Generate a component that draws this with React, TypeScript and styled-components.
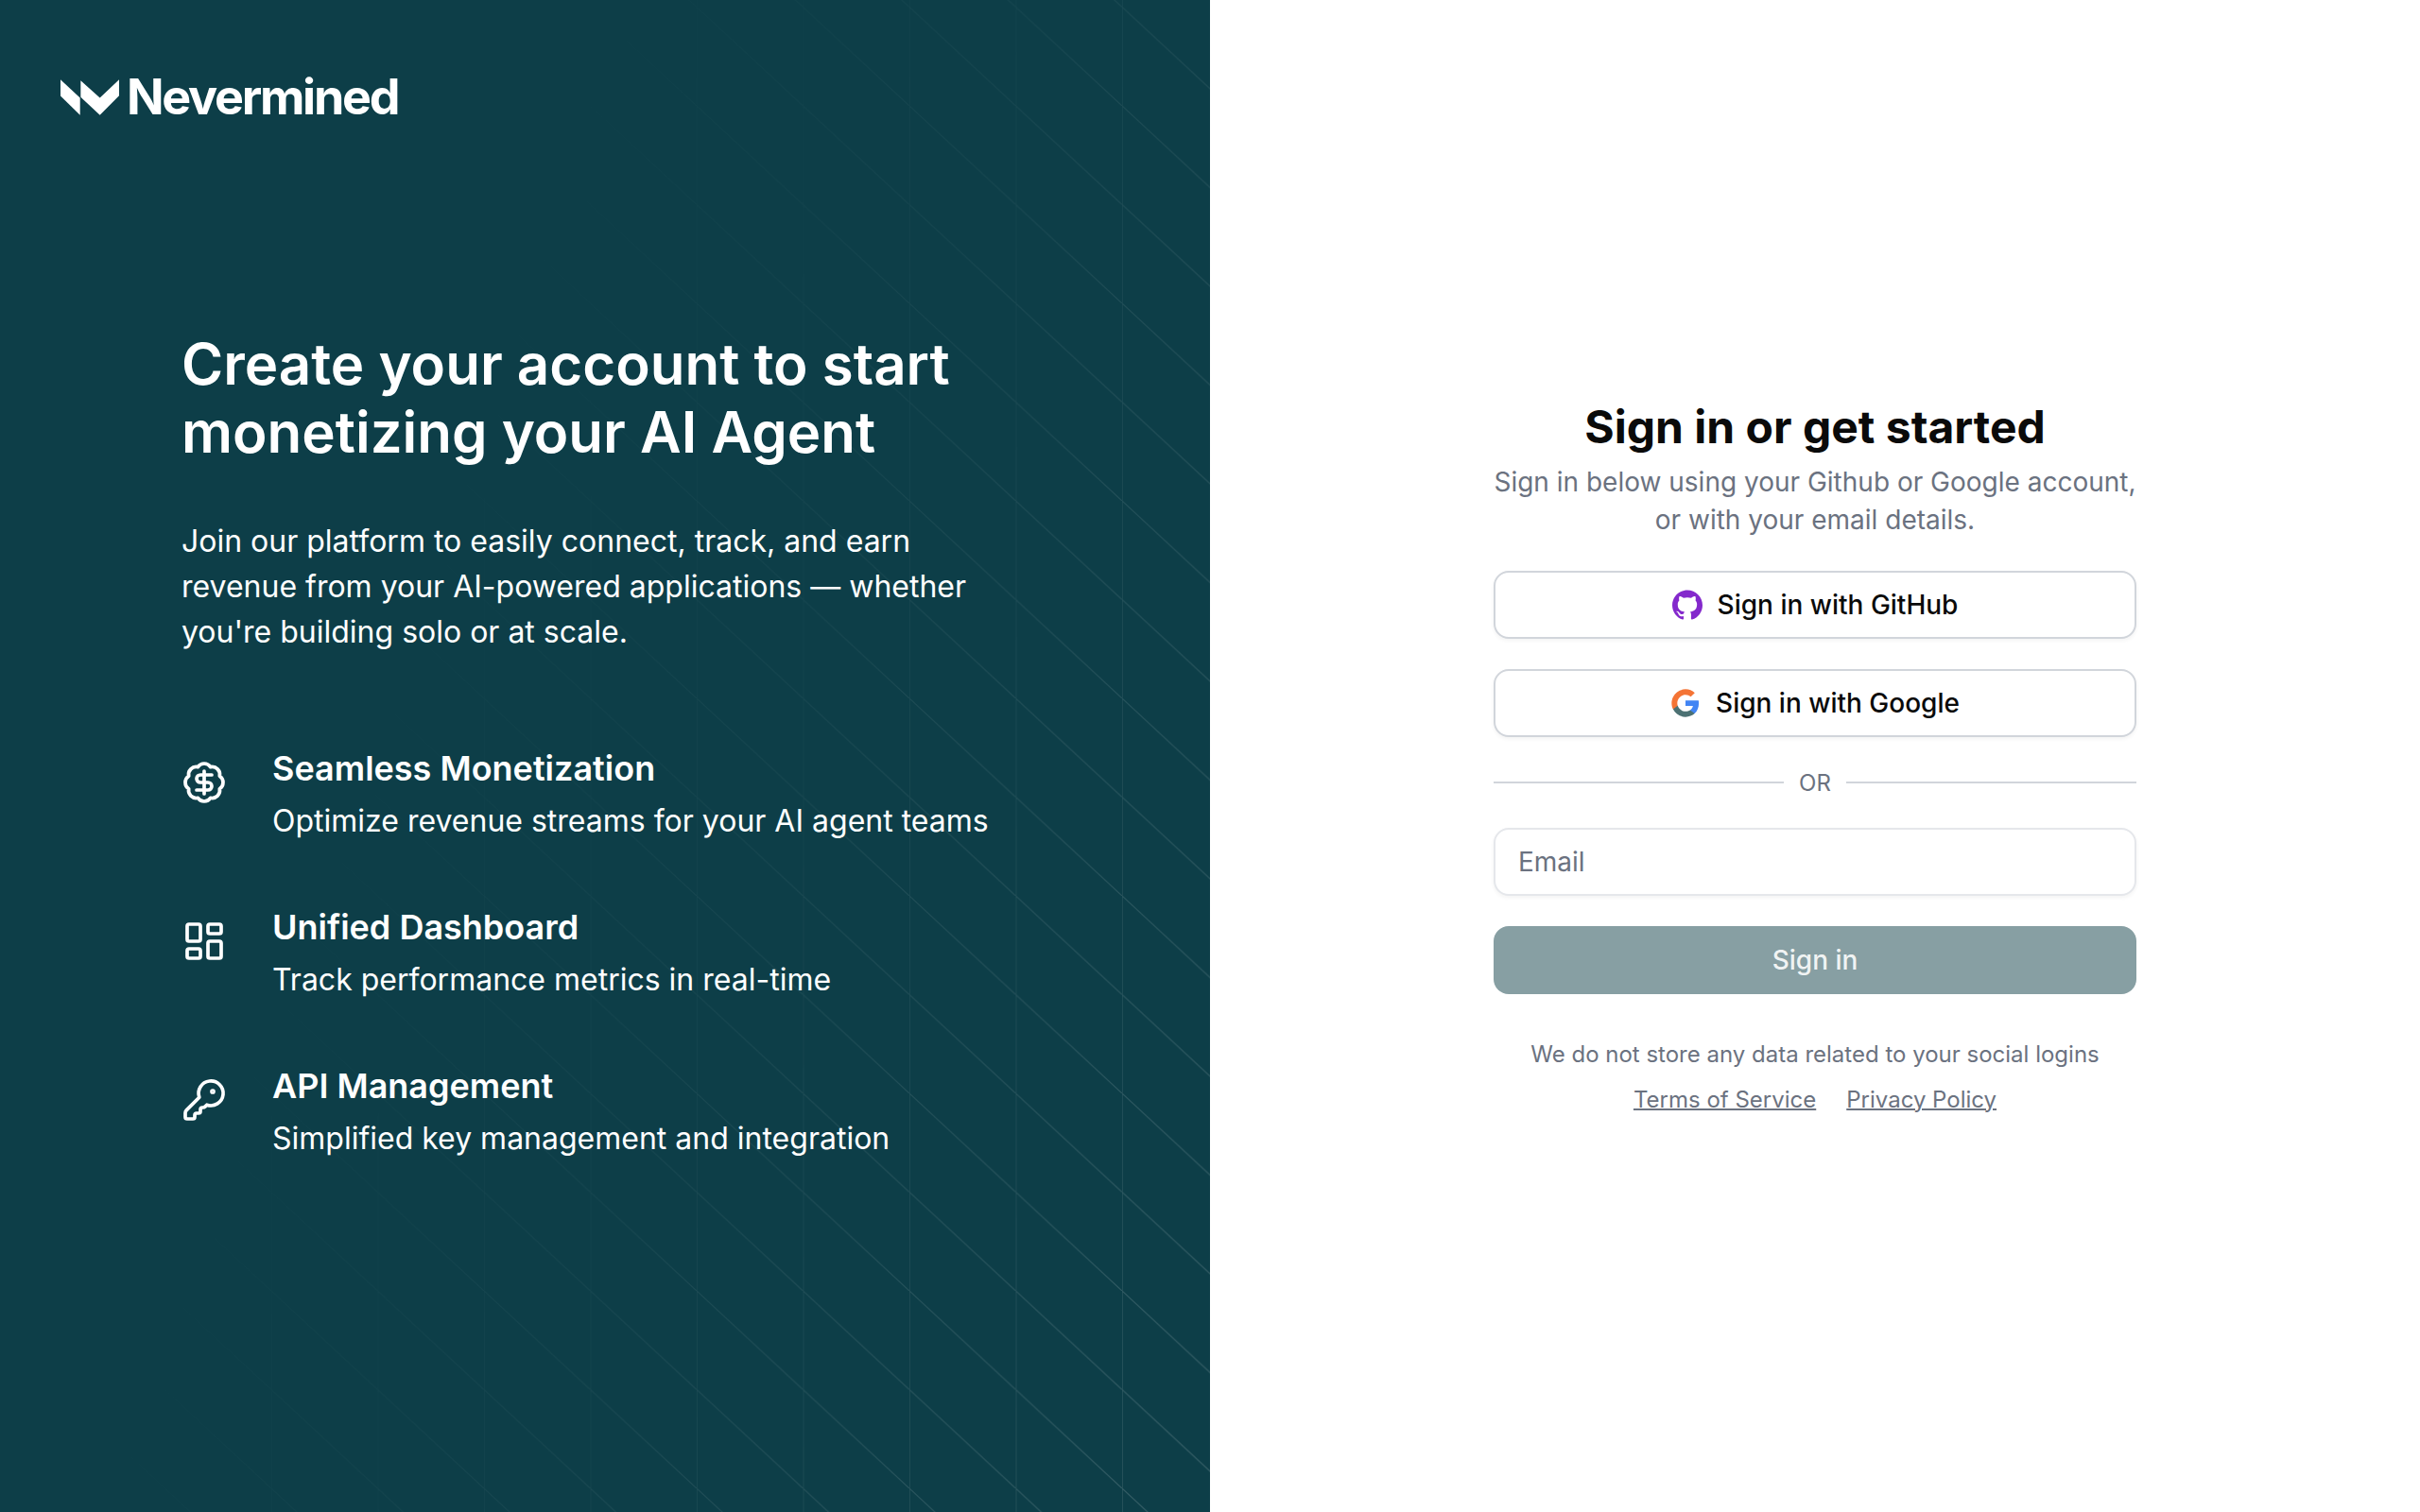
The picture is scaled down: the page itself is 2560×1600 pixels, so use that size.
import { BadgeDollarSign, KeyRound, LayoutDashboard } from "lucide-react";
import { SiGithub } from "react-icons/si";
import styled, { createGlobalStyle } from "styled-components";

const GlobalStyle = createGlobalStyle`
  html, body {
    margin: 0;
    padding: 0;
    background: #fff;
  }
  * {
    box-sizing: border-box;
  }
  body {
    font-family: Inter, "Liberation Sans", sans-serif;
  }
`;

const Page = styled.div`
  display: grid;
  grid-template-columns: 1280px 1280px;
  width: 2560px;
  height: 1600px;
  overflow: hidden;
`;

const BrandPanel = styled.section`
  position: relative;
  display: flex;
  flex-direction: column;
  background: #0d3e48;
  color: #fff;
  overflow: hidden;
`;

const PatternLayer = styled.svg`
  position: absolute;
  inset: 0;
  width: 100%;
  height: 100%;
  mask-image: linear-gradient(109deg, transparent 32%, rgba(0, 0, 0, 0.25) 60%, #000 100%);
`;

const LogoRow = styled.div`
  position: relative;
  display: flex;
  align-items: center;
  gap: 8px;
  padding: 70px 0 0 64px;
  height: 135px;
`;

const LogoText = styled.span`
  font-size: 52px;
  line-height: 64px;
  font-weight: 650;
  letter-spacing: -2.3px;
`;

const Hero = styled.div`
  position: relative;
  width: 896px;
  margin: 214px 0 0 192px;
`;

const Heading = styled.h1`
  margin: 0;
  font-size: 60px;
  line-height: 72px;
  font-weight: 600;
`;

const Lead = styled.p`
  margin: 56px 0 0;
  font-size: 32px;
  line-height: 48px;
  font-weight: 400;
`;

const FeatureList = styled.ul`
  display: flex;
  flex-direction: column;
  gap: 60px;
  margin: 92px 0 0;
  padding: 0;
  list-style: none;
`;

const Feature = styled.li`
  display: flex;
  gap: 48px;
`;

const FeatureIcon = styled.span`
  display: flex;
  flex: none;
  width: 48px;
  height: 48px;
  margin-top: 19px;
`;

const FeatureTitle = styled.div`
  font-size: 36px;
  line-height: 56px;
  font-weight: 600;
`;

const FeatureText = styled.div`
  margin-top: 4px;
  font-size: 32px;
  line-height: 48px;
`;

const FormPanel = styled.section`
  display: flex;
  align-items: center;
  justify-content: center;
  background: #fff;
`;

const Form = styled.div`
  display: flex;
  flex-direction: column;
  width: 680px;
`;

const Title = styled.h2`
  margin: 0;
  font-size: 48px;
  line-height: 64px;
  font-weight: 700;
  text-align: center;
  color: #0a0a0a;
`;

const Subtitle = styled.p`
  margin: 6px 0 34px;
  font-size: 28px;
  line-height: 40px;
  text-align: center;
  color: #6b7280;
`;

const SocialButton = styled.button`
  display: flex;
  align-items: center;
  justify-content: center;
  gap: 16px;
  width: 100%;
  height: 72px;
  margin-bottom: 32px;
  border: 2px solid #d1d5db;
  border-radius: 16px;
  background: #fff;
  box-shadow: 0 2px 4px rgba(0, 0, 0, 0.05);
  font-family: inherit;
  font-size: 28px;
  font-weight: 500;
  color: #0a0a0a;
`;

const Divider = styled.div`
  display: flex;
  align-items: center;
  gap: 16px;
  height: 32px;
  margin-bottom: 32px;
  font-size: 24px;
  color: #6b7280;

  &::before,
  &::after {
    content: "";
    flex: 1;
    height: 2px;
    background: #d1d5db;
  }
`;

const EmailInput = styled.input`
  width: 100%;
  height: 72px;
  margin-bottom: 32px;
  padding: 0 24px;
  border: 2px solid #e5e7eb;
  border-radius: 16px;
  background: #fff;
  box-shadow: 0 2px 4px rgba(0, 0, 0, 0.05);
  font-family: inherit;
  font-size: 28px;
  outline: none;

  &::placeholder {
    color: #6b7280;
    opacity: 1;
  }
`;

const SubmitButton = styled.button`
  width: 100%;
  height: 72px;
  border: none;
  border-radius: 16px;
  background: #879fa3;
  font-family: inherit;
  font-size: 28px;
  font-weight: 500;
  color: rgba(255, 255, 255, 0.9);
`;

const Notice = styled.p`
  margin: 48px 0 0;
  font-size: 24px;
  line-height: 32px;
  text-align: center;
  color: #6b7280;
`;

const LegalLinks = styled.div`
  display: flex;
  justify-content: center;
  gap: 32px;
  margin-top: 16px;
`;

const LegalLink = styled.a`
  font-size: 24px;
  line-height: 32px;
  color: #6b7280;
  text-decoration: underline;
  text-decoration-thickness: 2px;
`;

const features = [
  {
    title: "Seamless Monetization",
    text: "Optimize revenue streams for your AI agent teams",
    Icon: BadgeDollarSign,
  },
  {
    title: "Unified Dashboard",
    text: "Track performance metrics in real-time",
    Icon: LayoutDashboard,
  },
  {
    title: "API Management",
    text: "Simplified key management and integration",
    Icon: KeyRound,
  },
];

const LogoMark = () => (
  <svg width="62" height="38" viewBox="0 0 186 113" fill="#fff">
    <path d="M0 0L62 58V113L0 52Z" />
    <path d="M64 3L125 58L186 0V51L125 113L64 56Z" />
  </svg>
);

const GoogleMark = () => (
  <svg width="32" height="32" viewBox="0 0 24 24">
    <path fill="#4285f4" d="M22.56 12.25c0-.78-.07-1.53-.2-2.25H12v4.26h5.92c-.26 1.37-1.04 2.53-2.21 3.31v2.77h3.57c2.08-1.92 3.28-4.74 3.28-8.09z" />
    <path fill="#4c7173" d="M12 23c2.97 0 5.46-.98 7.28-2.66l-3.57-2.77c-.98.66-2.23 1.06-3.71 1.06-2.86 0-5.29-1.93-6.16-4.53H2.18v2.84C3.99 20.53 7.7 23 12 23z" />
    <path fill="#f47435" d="M5.84 14.09c-.22-.66-.35-1.36-.35-2.09s.13-1.43.35-2.09V7.07H2.18C1.43 8.55 1 10.22 1 12s.43 3.45 1.18 4.93l2.85-2.22.81-.62z" />
    <path fill="#f47435" d="M12 5.38c1.62 0 3.06.56 4.21 1.64l3.15-3.15C17.45 2.09 14.97 1 12 1 7.7 1 3.99 3.47 2.18 7.07l3.66 2.84c.87-2.6 3.3-4.53 6.16-4.53z" />
  </svg>
);

const App = () => (
  <>
    <GlobalStyle />
    <Page>
      <BrandPanel>
        <PatternLayer aria-hidden="true">
          <defs>
            <pattern id="grid" x="62" y="7.5" width="112.5" height="104.5" patternUnits="userSpaceOnUse">
              <path d="M0 0V104.5M0 0L112.5 104.5" fill="none" stroke="#fff" strokeOpacity="0.18" strokeWidth="1.2" />
            </pattern>
          </defs>
          <rect width="100%" height="100%" fill="url(#grid)" />
        </PatternLayer>
        <LogoRow>
          <LogoMark />
          <LogoText>Nevermined</LogoText>
        </LogoRow>
        <Hero>
          <Heading>
            Create your account to start
            <br />
            monetizing your AI Agent
          </Heading>
          <Lead>
            Join our platform to easily connect, track, and earn revenue from your AI-powered
            applications — whether you're building solo or at scale.
          </Lead>
          <FeatureList>
            {features.map(({ title, text, Icon }) => (
              <Feature key={title}>
                <FeatureIcon>
                  <Icon size={48} strokeWidth={1.85} />
                </FeatureIcon>
                <div>
                  <FeatureTitle>{title}</FeatureTitle>
                  <FeatureText>{text}</FeatureText>
                </div>
              </Feature>
            ))}
          </FeatureList>
        </Hero>
      </BrandPanel>
      <FormPanel>
        <Form>
          <Title>Sign in or get started</Title>
          <Subtitle>
            Sign in below using your Github or Google account,
            <br />
            or with your email details.
          </Subtitle>
          <SocialButton type="button">
            <SiGithub size={32} color="#8429cc" />
            Sign in with GitHub
          </SocialButton>
          <SocialButton type="button">
            <GoogleMark />
            Sign in with Google
          </SocialButton>
          <Divider>OR</Divider>
          <EmailInput type="email" placeholder="Email" />
          <SubmitButton type="button">Sign in</SubmitButton>
          <Notice>We do not store any data related to your social logins</Notice>
          <LegalLinks>
            <LegalLink href="#terms">Terms of Service</LegalLink>
            <LegalLink href="#privacy">Privacy Policy</LegalLink>
          </LegalLinks>
        </Form>
      </FormPanel>
    </Page>
  </>
);

export default App;
